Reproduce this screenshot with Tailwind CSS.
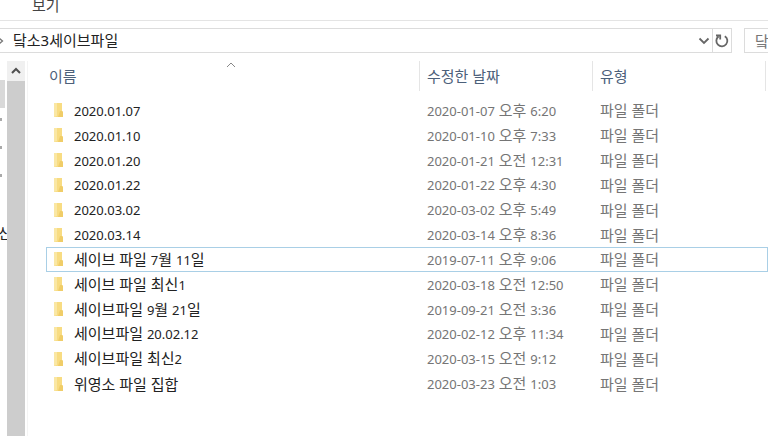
<!DOCTYPE html>
<html lang="ko">
<head>
    <meta charset="UTF-8">
    <meta name="viewport" content="width=device-width, initial-scale=1.0">
    <script src="https://cdn.jsdelivr.net/npm/@tailwindcss/browser@4"></script>
    <title>닼소3세이브파일</title>
</head>
<body class="flex h-screen flex-col overflow-hidden bg-white font-['Noto_Sans','Noto_Sans_CJK_KR',sans-serif] text-[15px] leading-5 text-[#222]">
    <!-- ribbon tab -->
    <nav class="flex h-[21px] shrink-0 items-end border-b border-[#e4e4e4] pl-8">
        <a href="#" class="pb-[5px] text-[#444]">보기</a>
    </nav>

    <!-- address bar + search -->
    <div class="mt-[7px] flex h-[25px] shrink-0 gap-3">
        <div class="flex flex-1 items-center border-y border-r border-[#dcdcdc]">
            <svg class="h-2 w-1 shrink-0" viewBox="0 0 4 8" fill="none" stroke="#777" stroke-width="1.3"><path d="M-1 1l3.500 3-3.500 3"/></svg>
            <input type="text" aria-label="주소" value="닼소3세이브파일" class="h-full min-w-0 flex-1 pb-0.5 pl-[9px] outline-none">
            <button type="button" aria-label="이전 위치" class="flex h-full w-4 items-center justify-center">
                <svg class="h-2 w-3" viewBox="0 0 12 8" fill="none" stroke="#666" stroke-width="1.800"><path d="M1.500 1.500l4.500 4.500 4.500-4.500"/></svg>
            </button>
            <button type="button" aria-label="새로 고침" class="flex h-full w-[19px] items-center justify-center border-l border-[#dcdcdc]">
                <svg class="h-[14px] w-[14px]" viewBox="0 0 14 14" fill="none" stroke="#666" stroke-width="1.800"><path d="M9.800 2.200a5.500 5.500 0 1 1-6.300.300M1 1.500h4.200v4"/></svg>
            </button>
        </div>
        <div class="w-6 overflow-hidden border-y border-l border-[#dcdcdc]">
            <input type="text" aria-label="검색" placeholder="닼소3세이브파일 검색" class="h-full w-40 pl-[10px] outline-none placeholder:text-[#777]">
        </div>
    </div>

    <div class="flex min-h-0 flex-1 pt-2">
        <!-- navigation pane -->
        <aside class="flex w-[7px] shrink-0 flex-col overflow-hidden pt-[19px]">
            <div class="h-[28px] w-[5px] shrink-0 bg-[#d9d9d9]"></div>
            <div class="flex shrink-0 flex-col gap-[25px] pt-[10px]">
                <span class="h-[3px] w-[2px] bg-[#aaa]"></span>
                <span class="h-[3px] w-[2px] bg-[#aaa]"></span>
                <span class="h-[3px] w-[2px] bg-[#aaa]"></span>
            </div>
            <span class="-ml-0.5 mt-[46px] whitespace-nowrap">신</span>
        </aside>
        <div class="w-[18px] shrink-0 bg-[#cdcdcd]">
            <button type="button" aria-label="위로" class="flex h-5 w-full items-center justify-center bg-[#f0f0f0]">
                <svg class="h-2 w-[10px]" viewBox="0 0 10 8" fill="none" stroke="#505050" stroke-width="2"><path d="M1 6l4-4 4 4"/></svg>
            </button>
        </div>

        <main class="ml-[2px] min-w-0 flex-1 border-l border-[#f4f4f4] pl-[18px]">
            <table class="h-[335px] w-full table-fixed border-collapse text-left">
                <colgroup>
                    <col class="w-[374px]">
                    <col class="w-[173px]">
                    <col>
                </colgroup>
                <thead>
                    <tr class="h-[37px] align-top text-[#4c607a]">
                        <th class="relative p-0 font-normal">
                            <svg class="absolute top-px left-[180px] h-[6px] w-[10px]" viewBox="0 0 10 6" fill="none" stroke="#888"><path d="M1 5l4-4 4 4"/></svg>
                            <div class="h-[30px] border-r border-[#e5e5e5] pt-[5px] pl-[3px]">이름</div>
                        </th>
                        <th class="p-0 font-normal"><div class="h-[30px] border-r border-[#e5e5e5] pt-[5px] pl-[7px]">수정한 날짜</div></th>
                        <th class="p-0 font-normal"><div class="mr-[2px] h-[30px] border-r border-[#e5e5e5] pt-[5px] pl-[7px]">유형</div></th>
                    </tr>
                </thead>
                <tbody id="files"></tbody>
            </table>
        </main>
    </div>

    <script>
        const files = [
            ['2020.01.07', '2020-01-07 오후 6:20'],
            ['2020.01.10', '2020-01-10 오후 7:33'],
            ['2020.01.20', '2020-01-21 오전 12:31'],
            ['2020.01.22', '2020-01-22 오후 4:30'],
            ['2020.03.02', '2020-03-02 오후 5:49'],
            ['2020.03.14', '2020-03-14 오후 8:36'],
            ['세이브 파일 7월 11일', '2019-07-11 오후 9:06'],
            ['세이브 파일 최신1', '2020-03-18 오전 12:50'],
            ['세이브파일 9월 21일', '2019-09-21 오전 3:36'],
            ['세이브파일 20.02.12', '2020-02-12 오후 11:34'],
            ['세이브파일 최신2', '2020-03-15 오전 9:12'],
            ['위영소 파일 집합', '2020-03-23 오전 1:03'],
        ];
        const focused = 6;

        const folder = `<svg class="h-[14px] w-[11px] shrink-0" viewBox="0 0 11 14">
            <path d="M1 0h8v8l1 1v5H1z" fill="#f8dc82"/>
            <path d="M1 0h3v13l-3 1z" fill="#fae7a4"/>
            <path d="M7 8l2 0 1 1v5H5z" fill="#f0cd68"/>
        </svg>`;

        // digits are set smaller than hangul
        const digits = (text) => text.replace(/[\d.:-]+/g, '<span class="text-[13px]">$&</span>');

        document.getElementById('files').innerHTML = files.map(([name, date], i) => `
            <tr class="${i === focused ? 'outline outline-1 -outline-offset-1 outline-[#a9cfe6]' : ''}">
                <td class="p-0"><div class="flex items-center gap-[10px] pl-[7px]">${folder}<span>${digits(name)}</span></div></td>
                <td class="p-0 pl-[7px] text-[#757575]">${digits(date)}</td>
                <td class="p-0 pl-[7px] text-[#757575]">파일 폴더</td>
            </tr>`).join('');
    </script>
</body>
</html>
